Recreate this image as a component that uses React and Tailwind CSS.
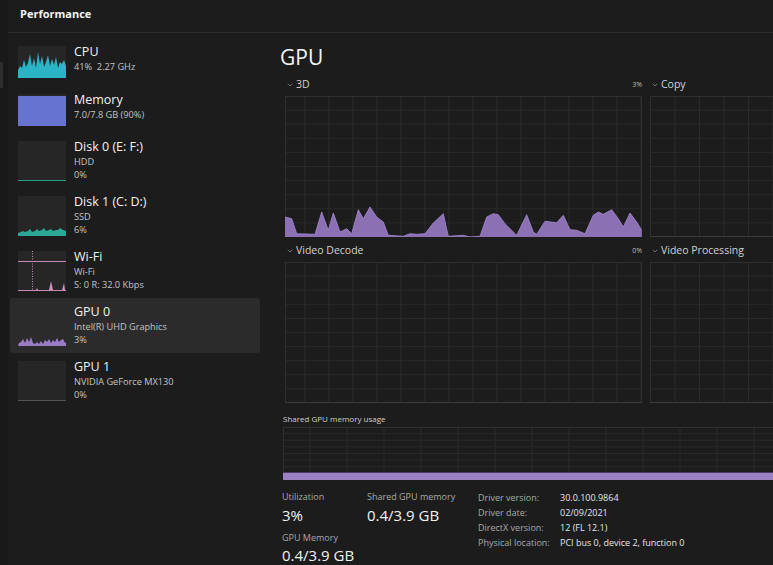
import React from 'react'
import { ChevronDown } from 'lucide-react'

const font = { fontFamily: '"Open Sans", "Noto Sans", sans-serif' }

const gpuPoints = [
  [0, 121], [6.7, 122.7], [11.7, 137.7], [30, 138.3], [36.7, 116], [43.3, 134.3], [48.3, 117], [55, 136],
  [61.7, 132.7], [66.7, 137.7], [73.3, 113.7], [78.3, 122.7], [85, 111], [91.7, 121], [98.3, 126], [103.3, 139.3],
  [118.3, 140.3], [125, 137.7], [131.7, 138.3], [140, 137.7], [148.3, 127], [158.3, 117.7], [163.3, 140.3],
  [178.3, 139.3], [185, 141], [195, 140.3], [201.7, 121], [208.3, 117.7], [213.3, 118.7], [220, 127.7],
  [231.7, 139.3], [241.7, 118.7], [248.3, 136], [251.7, 138.3], [260, 125.3], [271.7, 126.7], [278.3, 119.3],
  [285, 133.7], [291.7, 134.3], [300, 137.7], [308.3, 119.3], [313.3, 116], [318.3, 118.3], [326.7, 113.7],
  [333.3, 122.7], [338.3, 131], [345, 117], [351.7, 126], [356.7, 134.3], [357, 141], [0, 141],
]

function Grid({ width, height, colStart, colStep, rows, children }){
  const cols = []
  for(let x = colStart; x < width; x += colStep) cols.push(x)
  const hs = []
  for(let i = 1; i < rows; i++) hs.push((height / rows) * i)
  return (
    <svg width={width} height={height} className="block">
      {cols.map((x) => <line key={'v' + x} x1={x} y1={0} x2={x} y2={height} stroke="#2a2a2a" strokeWidth="1" />)}
      {hs.map((y) => <line key={'h' + y} x1={0} y1={y} x2={width} y2={y} stroke="#2a2a2a" strokeWidth="1" />)}
      <rect x="0.5" y="0.5" width={width - 1} height={height - 1} fill="none" stroke="#2f2f2f" />
      <line x1="0" y1={height - 0.5} x2={width} y2={height - 0.5} stroke="#3c3c3c" />
      {children}
    </svg>
  )
}

function ChartHeader({ label, pct }){
  return (
    <div className="flex items-center justify-between h-[14px] pl-[1px]">
      <div className="flex items-center gap-[2px] text-[10.5px] text-[#d2d2d2]">
        <ChevronDown className="h-[8px] w-[8px] text-[#9a9a9a]" strokeWidth={2} />
        <span>{label}</span>
      </div>
      {pct && <span className="text-[7px] text-[#bdbdbd]">{pct}</span>}
    </div>
  )
}

function Thumb({ kind, h = 40 }){
  const w = 48
  let inner = null
  if(kind === 'cpu'){
    inner = (
      <path d="M0 24 L2 20 L4 22 L6 14 L8 21 L10 17 L12 8 L14 20 L16 12 L18 22 L20 6 L22 18 L24 10 L26 21 L28 16 L30 9 L32 20 L34 13 L36 19 L38 11 L40 22 L42 16 L44 18 L46 14 L48 20 L48 32 L0 32 Z" fill="#2bb3c6" />
    )
  }
  if(kind === 'mem'){
    inner = <rect x="0" y="2" width={w} height={h - 2} fill="#6673d1" />
  }
  if(kind === 'disk0'){
    inner = <line x1="0" y1={h - 0.5} x2={w} y2={h - 0.5} stroke="#2a9c88" />
  }
  if(kind === 'disk1'){
    inner = (
      <path d="M0 40 L0 37 L3 36 L5 35 L7 36 L10 35 L12 33 L14 36 L17 35 L19 33 L21 35 L24 34 L26 32 L28 35 L31 34 L33 33 L35 35 L38 34 L40 34 L42 32 L45 34 L48 35 L48 40 Z" fill="#2aa795" />
    )
  }
  if(kind === 'wifi'){
    inner = (
      <g>
        <line x1="0" y1="10.5" x2={w} y2="10.5" stroke="#c98bb5" />
        <line x1="14.5" y1="0" x2="14.5" y2="39" stroke="#c98bb5" strokeDasharray="1 1.5" />
        <line x1="0" y1="39.5" x2={w} y2="39.5" stroke="#c98bb5" />
        <path d="M31 39 L33 30 L35 39 Z M44 39 L46 32 L47 39 Z M18 39 L19 37 L20 39 Z" fill="#d68fc0" />
      </g>
    )
  }
  if(kind === 'gpu0'){
    inner = (
      <path d="M0 40 L1 37 L3 36 L5 33 L7 37 L9 32 L11 36 L13 31 L15 37 L17 38 L19 36 L21 38 L23 35 L25 38 L27 34 L29 36 L31 33 L33 37 L35 34 L37 36 L39 32 L41 36 L43 34 L45 33 L47 37 L48 36 L48 40 Z" fill="#9a7bc6" />
    )
  }
  if(kind === 'gpu1'){
    inner = <line x1="0" y1={h - 0.5} x2={w} y2={h - 0.5} stroke="#555" />
  }
  return (
    <svg width={w} height={h} className={`block shrink-0 ${kind === 'gpu0' ? '' : 'bg-[#262626]'}`}>
      {inner}
    </svg>
  )
}

const items = [
  { title: 'CPU', lines: ['41%  2.27 GHz'], kind: 'cpu', h: 32, rowH: 'h-[48px]' },
  { title: 'Memory', lines: ['7.0/7.8 GB (90%)'], kind: 'mem', h: 32, rowH: 'h-[47px]' },
  { title: 'Disk 0 (E: F:)', lines: ['HDD', '0%'], kind: 'disk0', h: 40, rowH: 'h-[55px]' },
  { title: 'Disk 1 (C: D:)', lines: ['SSD', '6%'], kind: 'disk1', h: 40, rowH: 'h-[55px]' },
  { title: 'Wi-Fi', lines: ['Wi-Fi', 'S: 0 R: 32.0 Kbps'], kind: 'wifi', h: 40, rowH: 'h-[55px]' },
  { title: 'GPU 0', lines: ['Intel(R) UHD Graphics', '3%'], kind: 'gpu0', h: 40, rowH: 'h-[55px]', active: true },
  { title: 'GPU 1', lines: ['NVIDIA GeForce MX130', '0%'], kind: 'gpu1', h: 40, rowH: 'h-[55px]' },
]

function SideItem({ item }){
  return (
    <div className={`${item.rowH} w-[250px] flex items-center gap-[8px] pl-[8px] rounded-[3px] ${item.active ? 'bg-[#2b2b2b]' : ''}`}>
      <Thumb kind={item.kind} h={item.h} />
      <div className="self-start pt-[6px]">
        <div className="text-[12.5px] leading-[16px] text-[#f2f2f2]">{item.title}</div>
        {item.lines.map((l) => (
          <div key={l} className="text-[9.2px] leading-[13px] text-[#c4c4c4] whitespace-pre">{l}</div>
        ))}
      </div>
    </div>
  )
}

export default function App(){
  return (
    <div style={font} className="w-[773px] h-[565px] overflow-hidden bg-[#1c1c1c] flex">
      <div className="w-[8px] shrink-0 bg-[#191919] relative">
        <div className="absolute left-0 top-[62px] w-[3px] h-[26px] bg-[#2e2e2e]" />
      </div>
      <div className="flex-1 flex flex-col min-w-0">
        <div className="h-[33px] shrink-0 border-b border-[#2c2c2c] flex items-center pl-[12px] pb-[4px]">
          <span className="text-[11px] font-bold text-[#f4f4f4]">Performance</span>
        </div>
        <div className="flex flex-1 min-h-0">
          <div className="w-[271px] shrink-0 pl-[2px] pt-[5px] flex flex-col">
            {items.map((it) => <SideItem key={it.title} item={it} />)}
          </div>

          <div className="flex-1 min-w-0 overflow-hidden">
            <div className="pt-[10px] h-[38px] text-[21px] leading-[28px] text-[#f4f4f4] pl-[1px]">GPU</div>

            <div className="flex gap-[8px] mt-[7px] ml-[6px]">
              <div className="w-[357px] shrink-0">
                <ChartHeader label="3D" pct="3%" />
                <div className="mt-[4px]">
                  <Grid width={357} height={141} colStart={20} colStep={24} rows={10}>
                    <polygon points={gpuPoints.map((p) => p.join(',')).join(' ')} fill="#8b70b3" />
                    <polyline points={gpuPoints.slice(0, -2).map((p) => p.join(',')).join(' ')} fill="none" stroke="#a48ad0" strokeWidth="0.8" />
                  </Grid>
                </div>
              </div>
              <div className="w-[357px] shrink-0">
                <ChartHeader label="Copy" />
                <div className="mt-[4px]">
                  <Grid width={357} height={141} colStart={25} colStep={24.5} rows={10} />
                </div>
              </div>
            </div>

            <div className="flex gap-[8px] mt-[7px] ml-[6px]">
              <div className="w-[357px] shrink-0">
                <ChartHeader label="Video Decode" pct="0%" />
                <div className="mt-[4px]">
                  <Grid width={357} height={141} colStart={20} colStep={24} rows={10} />
                </div>
              </div>
              <div className="w-[357px] shrink-0">
                <ChartHeader label="Video Processing" />
                <div className="mt-[4px]">
                  <Grid width={357} height={141} colStart={25} colStep={24.5} rows={10} />
                </div>
              </div>
            </div>

            <div className="mt-[10px] ml-[4px] text-[8px] leading-[12px] text-[#cfcfcf]">Shared GPU memory usage</div>
            <div className="mt-[2px] ml-[4px] w-[520px]">
              <Grid width={520} height={53} colStart={27} colStep={37} rows={8}>
                <rect x="0" y="45" width="520" height="8" fill="#9b80c4" />
                <line x1="0" y1="45.5" x2="520" y2="45.5" stroke="#4a3a66" />
              </Grid>
            </div>

            <div className="flex items-start mt-[10px] ml-[3px]">
              <div className="w-[85px] shrink-0">
                <div className="text-[9px] leading-[14px] text-[#a9a9a9]">Utilization</div>
                <div className="text-[15px] leading-[22px] text-[#f2f2f2]">3%</div>
                <div className="mt-[5px] text-[9px] leading-[14px] text-[#a9a9a9]">GPU Memory</div>
                <div className="text-[15px] leading-[20px] text-[#f2f2f2]">0.4/3.9 GB</div>
              </div>
              <div className="w-[111px] shrink-0">
                <div className="text-[9px] leading-[14px] text-[#a9a9a9]">Shared GPU memory</div>
                <div className="text-[15px] leading-[22px] text-[#f2f2f2]">0.4/3.9 GB</div>
              </div>
              <div className="grid grid-cols-[82px_1fr] content-start text-[9px] leading-[15.3px] -mt-[0.5px]">
                <span className="text-[#a9a9a9]">Driver version:</span>
                <span className="text-[#e6e6e6]">30.0.100.9864</span>
                <span className="text-[#a9a9a9]">Driver date:</span>
                <span className="text-[#e6e6e6]">02/09/2021</span>
                <span className="text-[#a9a9a9]">DirectX version:</span>
                <span className="text-[#e6e6e6]">12 (FL 12.1)</span>
                <span className="text-[#a9a9a9]">Physical location:</span>
                <span className="text-[#e6e6e6] whitespace-nowrap">PCI bus 0, device 2, function 0</span>
              </div>
            </div>
          </div>
        </div>
      </div>
    </div>
  )
}
